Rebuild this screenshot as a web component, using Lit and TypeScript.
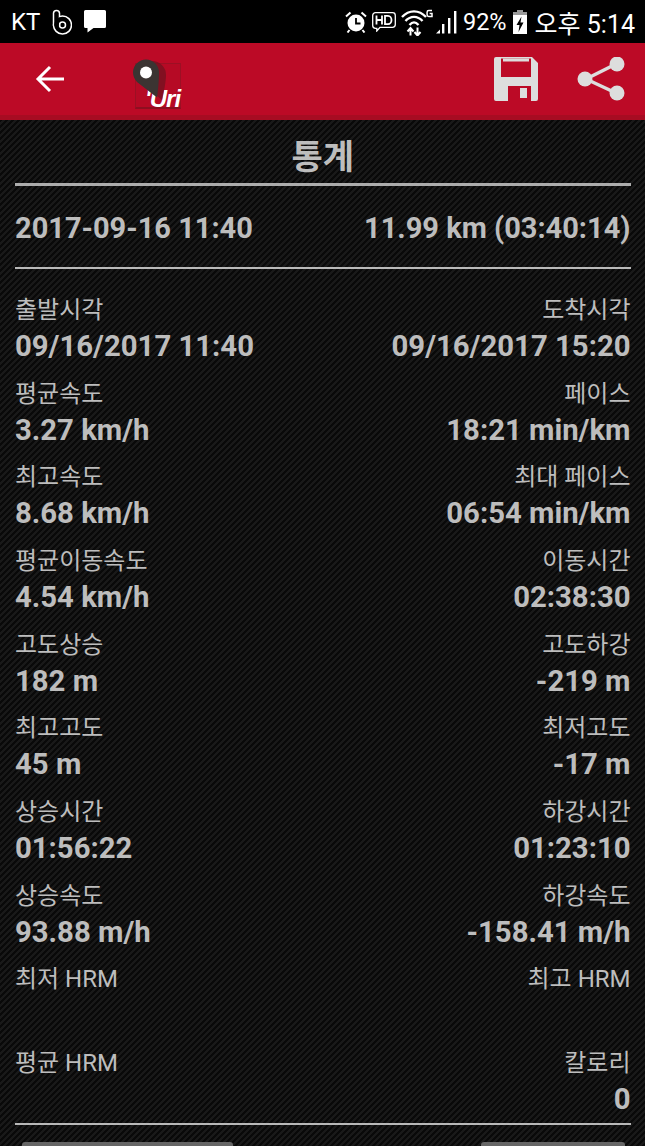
import {css, html, LitElement, svg} from "lit";
import {customElement} from "lit/decorators.js";

const stats = [
  ["출발시각", "09/16/2017 11:40", "도착시각", "09/16/2017 15:20"],
  ["평균속도", "3.27 km/h", "페이스", "18:21 min/km"],
  ["최고속도", "8.68 km/h", "최대 페이스", "06:54 min/km"],
  ["평균이동속도", "4.54 km/h", "이동시간", "02:38:30"],
  ["고도상승", "182 m", "고도하강", "-219 m"],
  ["최고고도", "45 m", "최저고도", "-17 m"],
  ["상승시간", "01:56:22", "하강시간", "01:23:10"],
  ["상승속도", "93.88 m/h", "하강속도", "-158.41 m/h"],
  ["최저 HRM", "", "최고 HRM", ""],
  ["평균 HRM", "", "칼로리", "0"],
]

const bIcon = svg`<svg width="20" height="26" viewBox="0 0 20 26" fill="none" stroke-linecap="round">
  <g stroke="#fff" stroke-width="7.500">
    <path d="M4.500 4.500V16"/>
    <circle cx="10.500" cy="16" r="6"/>
  </g>
  <g stroke="#000" stroke-width="4.500">
    <circle cx="10.500" cy="16" r="6"/>
    <path d="M4.500 4.500V16"/>
  </g>
</svg>`

const chatIcon = svg`<svg width="22" height="23" viewBox="0 0 22 23">
  <path d="M1.500 0h19A1.500 1.500 0 0 1 22 1.500v15a1.500 1.500 0 0 1-1.500 1.500H9.500L3.500 22.500V18H1.500A1.500 1.500 0 0 1 0 16.500v-15A1.500 1.500 0 0 1 1.500 0z" fill="#fff"/>
</svg>`

const alarmIcon = svg`<svg width="22" height="22" viewBox="0 0 22 22">
  <circle cx="11" cy="12" r="8.500" fill="#fff"/>
  <path d="M11 7v5.500h4.500" fill="none" stroke="#000" stroke-width="1.800"/>
  <path d="M1 5.500L5.500 1.500M21 5.500L16.500 1.500M4.500 19l-2 2.500M17.500 19l2 2.500" stroke="#fff" stroke-width="2"/>
</svg>`

const hdIcon = svg`<svg width="24" height="20" viewBox="0 0 24 20" fill="none" stroke="#fff">
  <path d="M3.500 .7h17a2.800 2.800 0 0 1 2.800 2.800v9a2.800 2.800 0 0 1-2.800 2.800H8L4.800 19v-2.700H3.500A2.800 2.800 0 0 1 .7 13.500v-10A2.800 2.800 0 0 1 3.500 .7z" stroke-width="1.300"/>
  <path d="M4.500 3.500v9M10 3.500v9M4.500 8h5.500" stroke-width="1.800"/>
  <path d="M13 3.800v8.400h3a3.500 4.200 0 0 0 0-8.400z" stroke-width="1.800"/>
</svg>`

const wifiIcon = svg`<svg width="32" height="28" viewBox="0 0 32 28" fill="none" stroke="#fff" stroke-width="2.400">
  <path d="M1 9C8 1.500 18 1.500 25 9"/>
  <path d="M4.500 13C9.500 7.500 16.500 7.500 21.500 13"/>
  <path d="M8.500 17C11.500 13.500 14.500 13.500 17.500 17"/>
  <path d="M9.500 27.500v-7M6.500 23.500l3-3.500 3 3.500M16.500 19.500v7.500M13.500 24l3 3.500 3-3.500" stroke-width="2"/>
  <path d="M31 2.500h-3.200a1.700 1.700 0 0 0-1.700 1.700v2.600a1.700 1.700 0 0 0 1.700 1.700h3.200V5.500h-2.400" stroke-width="1.500"/>
</svg>`

const signalIcon = svg`<svg width="22" height="24" viewBox="0 0 22 24" fill="#fff">
  <path d="M0 23.500L4 19.500V23.500z"/>
  <rect x="6" y="14" width="2.400" height="9.500"/>
  <rect x="12" y="8" width="2.400" height="15.500"/>
  <rect x="18" y="1" width="2.400" height="22.500"/>
</svg>`

const batteryIcon = svg`<svg width="14" height="24" viewBox="0 0 14 24">
  <path d="M4 0h6v2H4z" fill="#9a9a9a"/>
  <path d="M0 2h14v3H0z" fill="#9a9a9a"/>
  <path d="M0 5h14v19H0z" fill="#fff"/>
  <path d="M8.500 6.500L3.500 15h3l-1 7 5-9.500H7.500z" fill="#000"/>
</svg>`

const backIcon = svg`<svg width="30" height="28" viewBox="0 0 30 28" fill="none" stroke="#fff" stroke-width="3">
  <path d="M29 14H3M15 2L3 14l12 12"/>
</svg>`

const pinIcon = svg`<svg class="pin" width="36" height="42" viewBox="0 0 36 42">
  <path d="M15 1a14 14 0 0 1 14 14c0 6-2 17-4 25L8 26C3 22 1 19 1 15A14 14 0 0 1 15 1z" fill="#6c1220" opacity=".7" transform="translate(4 1)"/>
  <path d="M13 .5a13 13 0 0 1 13 13c0 8-1 19-2 25L4 23C1.500 20 0 17 0 13.500A13 13 0 0 1 13 .5z" fill="#3b3432"/>
  <circle cx="13" cy="13.500" r="6" fill="#fff"/>
</svg>`

const saveIcon = svg`<svg width="44" height="44" viewBox="0 0 44 44">
  <path fill-rule="evenodd" fill="#ddd" d="M2 0h36l6 6v36a2 2 0 0 1-2 2H2a2 2 0 0 1-2-2V2a2 2 0 0 1 2-2zM7 1.500V20h30V1.500zM14 29v15h23V29z"/>
  <rect x="9" y="1.500" width="26" height="3" fill="#ddd"/>
  <rect x="26" y="31" width="7" height="10" fill="#ddd"/>
</svg>`

const shareIcon = svg`<svg width="48" height="44" viewBox="0 0 48 44">
  <path d="M9 22L39 7M9 22l30 14" stroke="#ddd" stroke-width="3.500" fill="none"/>
  <circle cx="8" cy="22" r="7.500" fill="#ddd"/>
  <circle cx="40" cy="7" r="7.500" fill="#ddd"/>
  <circle cx="40" cy="36" r="7.500" fill="#ddd"/>
</svg>`

@customElement('app-root')
export class AppRoot extends LitElement {

  static styles = css`
    :host {
      display: block;
      width: 645px;
      height: 1146px;
      overflow: hidden;
      font-family: Roboto, "Noto Sans CJK KR", sans-serif;
      color: #bdbdbd;
      background-color: #090909;
      background-image: linear-gradient(135deg, #090909 25%, #191919 25%, #191919 50%, #090909 50%, #090909 75%, #191919 75%);
      background-size: 6px 6px;
    }

    .status {
      height: 43px;
      background: #000;
      color: #fff;
      display: flex;
      align-items: center;
      justify-content: space-between;
      padding: 0 10px 0 11px;
      font-size: 25px;
    }

    .status-left, .status-right {
      display: flex;
      align-items: center;
    }

    .status-left { gap: 12px; }

    .carrier { font-size: 24px; }

    .status-left svg { display: block; }

    .status-right svg { display: block; }

    .alarm { margin-right: 5px; }
    .hd { margin-right: 5px; }
    .signal { margin-left: 3px; margin-right: 5px; }
    .percent { font-size: 23.5px; }
    .battery { margin: 0 8px 0 6px; }

    .toolbar {
      height: 72px;
      background: #bc0a26;
      border-bottom: 5px solid #a70c22;
      display: flex;
      align-items: center;
      padding: 0 20px 0 35px;
    }

    .back { margin-right: 70px; display: flex; }

    .logo {
      position: relative;
      width: 46px;
      height: 46px;
      margin-top: 13px;
      background: #b60a25;
      border: 1px solid #9c1024;
      border-bottom: 2px solid #8d0f20;
      box-sizing: border-box;
    }

    .logo-text {
      display: block;
      padding: 24px 0 0 9px;
      color: #fff;
      font: italic bold 24px/22px "Liberation Sans", sans-serif;
      letter-spacing: -1px;
      white-space: nowrap;
    }

    .pin {
      position: absolute;
      left: -3px;
      top: -5px;
    }

    .actions {
      margin-left: auto;
      display: flex;
      align-items: center;
      gap: 39px;
    }

    .actions svg { display: block; }

    .body {
      padding: 0 14.5px 0 15px;
    }

    .title {
      height: 63px;
      line-height: 74px;
      border-bottom: 3px solid #acacac;
      text-align: center;
      font-size: 34px;
      font-weight: 700;
    }

    .summary {
      height: 83px;
      display: flex;
      align-items: center;
      justify-content: space-between;
      border-bottom: 2px solid #b8b8b8;
      font-size: 29px;
      font-weight: 700;
      padding-top: 2px;
      box-sizing: border-box;
    }

    .rows {
      padding-top: 23px;
    }

    .row {
      height: 83.67px;
      display: flex;
      justify-content: space-between;
    }

    .cell.end { text-align: right; }

    .label {
      font-size: 24px;
      line-height: 36px;
      height: 36px;
      color: #bdbdbd;
    }

    .value {
      font-size: 29.3px;
      font-weight: 700;
      line-height: 36px;
      height: 36px;
    }

    .rule {
      border-top: 2px solid #b8b8b8;
      margin-top: -5.7px;
    }

    .buttons {
      display: flex;
      justify-content: space-between;
      padding: 17px 6px 0 7px;
    }

    .button {
      height: 20px;
      background: #666;
      border-radius: 3px 3px 0 0;
    }

    .button.wide { width: 211px; }
    .button.narrow { width: 144px; }
  `

  render() {
    return html`
      <div class="status">
        <div class="status-left">
          <span class="carrier">KT</span>
          ${bIcon}
          ${chatIcon}
        </div>
        <div class="status-right">
          <span class="alarm">${alarmIcon}</span>
          <span class="hd">${hdIcon}</span>
          ${wifiIcon}
          <span class="signal">${signalIcon}</span>
          <span class="percent">92%</span>
          <span class="battery">${batteryIcon}</span>
          <span>오후 5:14</span>
        </div>
      </div>
      <div class="toolbar">
        <span class="back">${backIcon}</span>
        <div class="logo">
          <span class="logo-text">'Uri</span>
          ${pinIcon}
        </div>
        <div class="actions">
          ${saveIcon}
          ${shareIcon}
        </div>
      </div>
      <div class="body">
        <div class="title">통계</div>
        <div class="summary">
          <span>2017-09-16 11:40</span>
          <span>11.99 km (03:40:14)</span>
        </div>
        <div class="rows">
          ${stats.map(([l1, v1, l2, v2]) => html`
            <div class="row">
              <div class="cell">
                <div class="label">${l1}</div>
                <div class="value">${v1}</div>
              </div>
              <div class="cell end">
                <div class="label">${l2}</div>
                <div class="value">${v2}</div>
              </div>
            </div>
          `)}
        </div>
        <div class="rule"></div>
        <div class="buttons">
          <div class="button wide"></div>
          <div class="button narrow"></div>
        </div>
      </div>
    `
  }
}
